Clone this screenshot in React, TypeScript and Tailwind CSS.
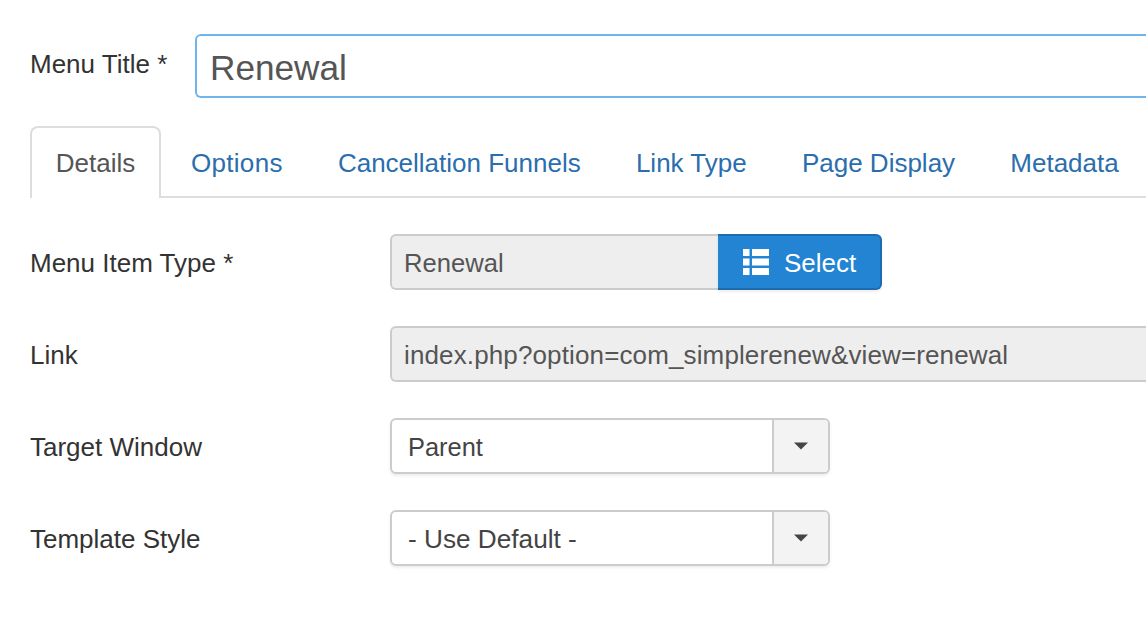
const font = "font-['Liberation_Sans',Arial,sans-serif]";

function Caret() {
  return (
    <svg width="14" height="8" viewBox="0 0 14 8" className="block">
      <path d="M0 0.5h14L7 7.5z" fill="#444" />
    </svg>
  );
}

function ListIcon() {
  return (
    <svg width="26" height="26" viewBox="0 0 26 26" className="block -mt-[2px]">
      <g fill="#fff">
        <rect x="0" y="0" width="6.5" height="7" />
        <rect x="9" y="0" width="17" height="7" />
        <rect x="0" y="9.5" width="6.5" height="7" />
        <rect x="9" y="9.5" width="17" height="7" />
        <rect x="0" y="19" width="6.5" height="7" />
        <rect x="9" y="19" width="17" height="7" />
      </g>
    </svg>
  );
}

function Row({ label, children }: { label: string; children: React.ReactNode }) {
  return (
    <div className="flex items-center h-[56px]">
      <div className="w-[360px] shrink-0 text-[#333] text-[26px] leading-none pt-[2px]">{label}</div>
      {children}
    </div>
  );
}

function Dropdown({ value, size }: { value: string; size: string }) {
  return (
    <div className="flex w-[440px] h-[56px] rounded-[6px] border-2 border-[#ccc] bg-white shadow-[0_2px_3px_rgba(0,0,0,0.07)] overflow-hidden">
      <div className={`flex-1 pl-[16px] pt-[3px] flex items-center text-[#444] ${size}`}>{value}</div>
      <div className="w-[56px] flex items-center justify-center bg-[#f3f3f3] border-l-2 border-[#ccc]">
        <Caret />
      </div>
    </div>
  );
}

export default function App() {
  const tabs = ["Cancellation Funnels", "Link Type", "Page Display", "Metadata"];

  return (
    <div className={`${font} w-[1146px] h-[626px] bg-white overflow-hidden`}>
      <div className="pt-[34px] pl-[30px] flex items-center">
        <div className="w-[165px] shrink-0 text-[#333] text-[26px] leading-none -mt-[4px]">Menu Title *</div>
        <div className="flex-1 h-[64px] rounded-l-[6px] border-2 border-r-0 border-[#6fb5ec] pl-[13px] pt-[5px] flex items-center text-[#555] text-[35.2px]">
          Renewal
        </div>
      </div>

      <div className="mt-[28px] ml-[30px] flex h-[72px] border-b-2 border-[#ddd]">
        <div className="w-[131px] shrink-0 h-[72px] rounded-t-[8px] border-2 border-b-0 border-[#ddd] bg-white flex items-center justify-center text-[#555] text-[26px]">
          Details
        </div>
        <div className="flex pl-[2.4px]">
          <div className="px-[27.6px] pt-[4px] h-[70px] flex items-center text-[#2a6ead] text-[26px] whitespace-nowrap tracking-[0.3px]">
            Options
          </div>
          {tabs.map((t) => (
            <div key={t} className="px-[27.6px] pt-[4px] h-[70px] flex items-center text-[#2a6ead] text-[26px] whitespace-nowrap">
              {t}
            </div>
          ))}
        </div>
      </div>

      <div className="mt-[36px] ml-[30px] flex flex-col gap-[36px]">
        <Row label="Menu Item Type *">
          <div className="flex h-[56px]">
            <div className="w-[328px] rounded-l-[6px] border-2 border-r-0 border-[#ccc] bg-[#eee] pl-[12px] pt-[3px] flex items-center text-[#555] text-[25.6px]">
              Renewal
            </div>
            <div className="w-[164px] rounded-r-[6px] bg-[#2384d3] border-2 border-l-0 border-[#1d6cb0] shadow-[0_2px_3px_rgba(0,0,0,0.07)] flex items-center gap-[15px] pl-[25px] pt-[2px] text-white text-[26px]">
              <ListIcon />
              Select
            </div>
          </div>
        </Row>
        <Row label="Link">
          <div className="flex-1 h-[56px] rounded-l-[6px] border-2 border-r-0 border-[#ccc] bg-[#eee] pl-[12px] pt-[2px] flex items-center text-[#555] text-[26px] tracking-[0.13px]">
            index.php?option=com_simplerenew&amp;view=renewal
          </div>
        </Row>
        <Row label="Target Window">
          <Dropdown value="Parent" size="text-[25.4px]" />
        </Row>
        <Row label="Template Style">
          <Dropdown value="- Use Default -" size="text-[26.2px]" />
        </Row>
      </div>
    </div>
  );
}
